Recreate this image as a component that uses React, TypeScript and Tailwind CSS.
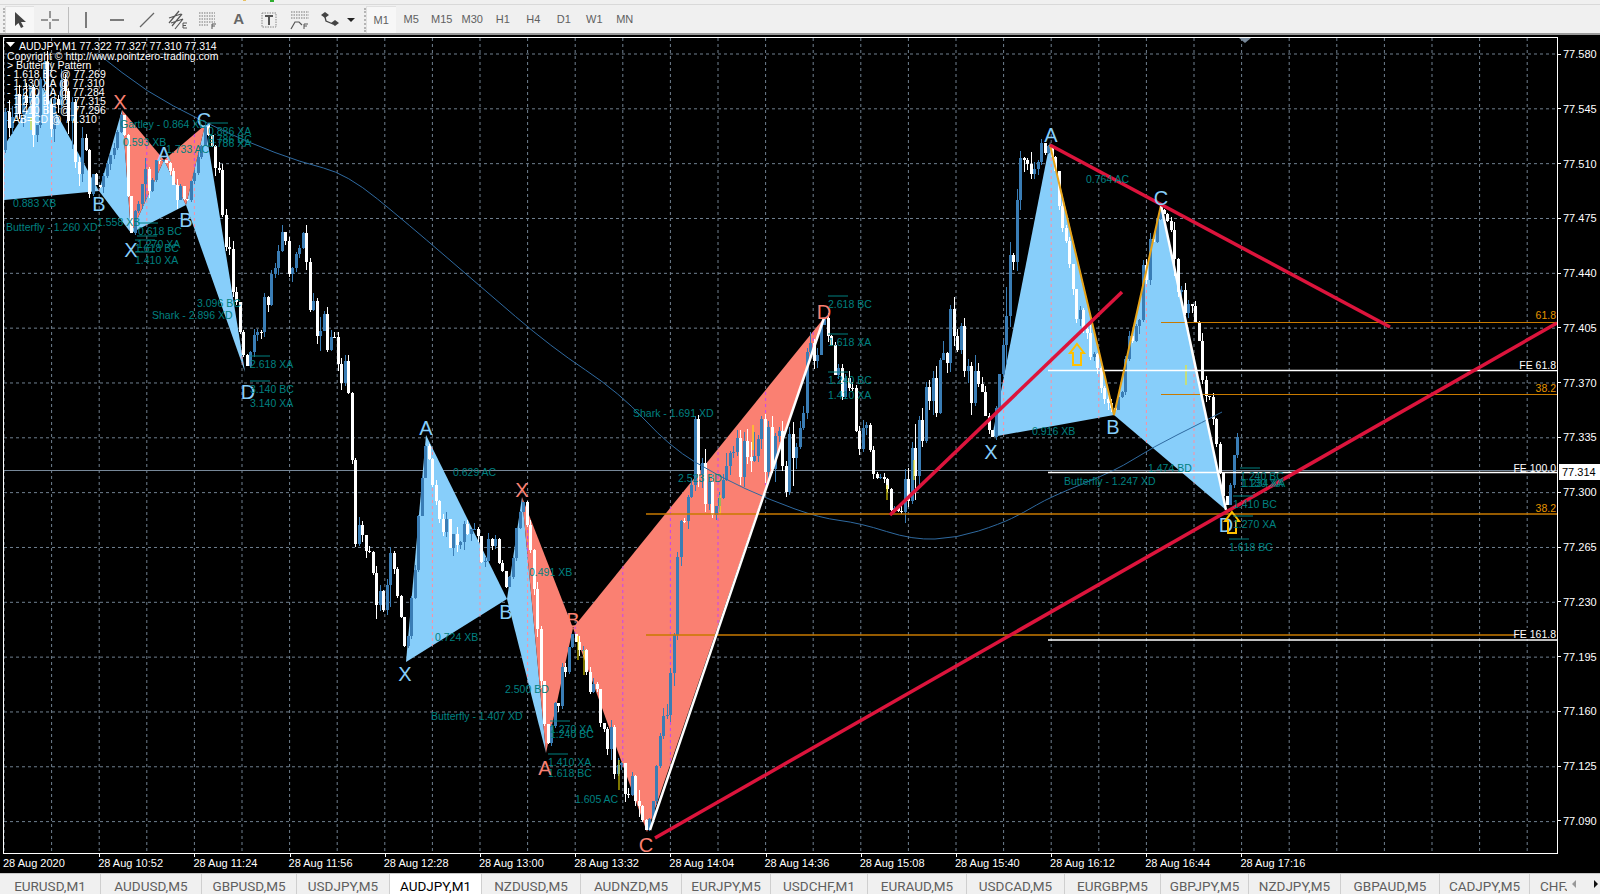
import { FC, ReactNode } from "react";

type Pt = [number, number];

// price path the candles follow, page pixels
const path: Pt[] = [
  [4, 150], [20, 125], [42, 92], [60, 105], [75, 140], [99, 191], [110, 150], [122, 110], [131, 233], [145, 175],
  [164, 160], [186, 205], [205, 125], [222, 195], [245, 372], [260, 320], [280, 240], [292, 260], [305, 245], [312, 310],
  [335, 345], [350, 400], [354, 530], [372, 560], [380, 610], [392, 550], [406, 662], [426, 435], [440, 535], [470, 548],
  [495, 555], [507, 590], [522, 497], [532, 560], [546, 753], [573, 628], [600, 720], [647, 832], [668, 700], [680, 500], [696, 440],
  [715, 500], [750, 440], [785, 470], [824, 318], [840, 380], [860, 430], [885, 480], [892, 515], [915, 470], [935, 385],
  [950, 335], [975, 385], [992, 437], [1022, 175], [1050, 142], [1075, 300], [1114, 415], [1161, 205], [1200, 360], [1226, 510], [1240, 420],
];

// noise dies out at the swing points so candles end on the pattern tips
const pivots = [99, 122, 131, 164, 186, 205, 245, 406, 426, 507, 522, 546, 573, 647, 824, 892, 992, 1050, 1114, 1161, 1226];

let seed = 1337;
const rnd = () => {
  seed = (seed * 16807) % 2147483647;
  return seed / 2147483647;
};

const yAt = (x: number) => {
  for (let i = 0; i < path.length - 1; i++) {
    const [x1, y1] = path[i];
    const [x2, y2] = path[i + 1];
    if (x >= x1 && x <= x2) return y1 + ((y2 - y1) * (x - x1)) / (x2 - x1);
  }
  return 420;
};

const candles: { x: number; top: number; h: number; hi: number; lo: number; up: boolean }[] = [];
let prev = 150;
for (let i = 0; 5 + i * 3.5 < 1240; i++) {
  const x = Math.round(5 + i * 3.5);
  const near = Math.min(...pivots.map((p) => Math.abs(p - x)));
  const wild = x < 95 || (x > 665 && x < 815) || (x > 900 && x < 1040) ? 1.7 : 1;
  const amp = Math.min(1, near / 14) * wild;
  const close = yAt(x) + (rnd() - 0.5) * 44 * amp;
  const top = Math.min(prev, close);
  const bottom = Math.max(prev, close);
  const spike = rnd() > 0.88 ? 22 : 8;
  candles.push({ x, top, h: Math.max(bottom - top, 1), hi: top - rnd() * spike * amp, lo: bottom + rnd() * spike * amp, up: close < prev });
  prev = close;
}

const blueFills = [
  "4,146 42,87 99,191 4,200",
  "99,191 122,110 131,233",
  "131,233 164,160 186,205",
  "186,205 205,125 245,372",
  "406,662 426,435 507,599",
  "507,599 522,497 546,753",
  "992,437 1050,142 1114,415",
  "1114,415 1161,205 1226,510",
];
const salmonFills = ["122,110 131,233 164,160", "164,160 186,205 205,125", "522,497 546,753 573,628", "573,628 647,832 824,318"];

const gridY = Array.from({ length: 15 }, (_, i) => 54 + i * 54.83);
const gridX = Array.from({ length: 33 }, (_, i) => 4 + i * 47.6);
const prices = Array.from({ length: 15 }, (_, i) => (77.58 - i * 0.035).toFixed(3));

const ma: Pt[] = [
  [97, 53], [147, 92], [200, 120], [250, 143], [300, 162], [347, 174], [408, 224], [480, 286], [551, 347], [620, 393], [670, 447], [720, 477],
  [770, 500], [820, 518], [860, 523], [913, 540], [957, 538], [1000, 524], [1023, 513], [1050, 497], [1115, 471], [1153, 447], [1203, 422], [1241, 402],
];
const maPath = ma.reduce((d, p, i) => {
  if (i === 0) return `M${p[0]} ${p[1]}`;
  const [px, py] = ma[i - 1];
  return `${d} Q${px} ${py} ${(px + p[0]) / 2} ${(py + p[1]) / 2}`;
}, "");

// teal pattern labels: text, x, baseline, overline
const notes: [string, number, number, boolean?][] = [
  ["0.883 XB", 13, 207], ["Butterfly - 1.260 XD", 6, 231], ["Gartley - 0.864 XD", 120, 128], ["0.593 XB", 123, 146], ["1.733 AC", 166, 153],
  ["0.886 XA", 208, 135, true], ["0.786 BC", 208, 143], ["0.786 XA", 208, 147], ["1.558 XB", 97, 226], ["0.618 BC", 138, 235, true],
  ["1.270 XA", 137, 248, true], ["1.618 BC", 135, 252, true], ["1.410 XA", 135, 264, true], ["3.096 BC", 197, 307], ["Shark - 2.896 XD", 152, 319],
  ["2.618 XA", 250, 368, true], ["3.140 BC", 250, 393, true], ["3.140 XA", 250, 407],
  ["0.629 AC", 453, 476], ["0.724 XB", 435, 641], ["2.500 BD", 505, 693], ["Butterfly - 1.407 XD", 431, 720], ["0.491 XB", 529, 576],
  ["1.270 XA", 550, 733, true], ["1.240 BC", 550, 738], ["1.410 XA", 548, 766, true], ["1.618 BC", 548, 777], ["1.605 AC", 575, 803],
  ["Shark - 1.691 XD", 633, 417], ["2.523 BD", 678, 482], ["2.618 BC", 828, 308, true], ["1.618 XA", 828, 346, true], ["1.240 BC", 828, 384, true], ["1.410 XA", 828, 399],
  ["0.764 AC", 1086, 183], ["0.916 XB", 1032, 435], ["1.474 BD", 1148, 472], ["Butterfly - 1.247 XD", 1064, 485],
  ["1.240 BC", 1240, 480, true], ["1.130 XA", 1240, 487], ["1.234 XA", 1242, 487], ["1.410 BC", 1233, 508, true], ["1.270 XA", 1233, 528, true], ["1.618 BC", 1229, 551, true],
];

const letters: [string, number, number, string][] = [
  ["B", 99, 211, "#87cefa"], ["X", 120, 109, "#fa8072"], ["C", 204, 127, "#87cefa"], ["A", 164, 161, "#87cefa"], ["B", 186, 227, "#87cefa"], ["X", 131, 257, "#87cefa"], ["D", 248, 399, "#87cefa"],
  ["A", 426, 435, "#87cefa"], ["X", 405, 681, "#87cefa"], ["B", 506, 619, "#87cefa"], ["X", 522, 497, "#fa8072"], ["B", 573, 627, "#fa8072"], ["A", 545, 775, "#fa8072"], ["C", 646, 852, "#fa8072"], ["D", 824, 319, "#fa8072"],
  ["A", 1051, 142, "#87cefa"], ["C", 1161, 205, "#87cefa"], ["B", 1113, 434, "#87cefa"], ["X", 991, 459, "#87cefa"], ["D", 1226, 532, "#87cefa"],
];

const yellows: [number, number, number][] = [[31, 118, 130], [578, 636, 660], [584, 650, 675], [619, 760, 790], [720, 495, 515], [753, 425, 450], [887, 485, 500], [914, 460, 480], [1186, 365, 385]];

const header = ["Copyright © http://www.pointzero-trading.com", "> Butterfly Pattern", "- 1.618 BC @ 77.269", "- 1.130 XA @ 77.310", "- 1.270 XA @ 77.284", "- 1.270 BC @ 77.315", "- 1.410 BC @ 77.296", "- AB=CD @ 77.310"];

const UpArrow: FC<{ x: number; y: number }> = ({ x, y }) => (
  <polygon points={`${x},${y - 11} ${x + 7},${y - 2} ${x + 4},${y - 2} ${x + 4},${y + 10} ${x - 4},${y + 10} ${x - 4},${y - 2} ${x - 7},${y - 2}`} fill="none" stroke="#ffc000" strokeWidth="2" />
);

const Chart = () => (
  <svg width="1553" height="815" viewBox="4 38 1553 815" className="block">
    <defs>
      <clipPath id="clipSalmon">{salmonFills.map((p) => <polygon key={p} points={p} />)}</clipPath>
      <clipPath id="clipBlue">{blueFills.map((p) => <polygon key={p} points={p} />)}</clipPath>
    </defs>
    {gridY.map((y) => <line key={y} x1="4" x2="1557" y1={y} y2={y} stroke="#708090" strokeDasharray="3 3" />)}
    {gridX.map((x) => <line key={x} x1={x} x2={x} y1="38" y2="853" stroke="#708090" strokeDasharray="3 3" />)}
    <line x1="4" x2="1557" y1="470.5" y2="470.5" stroke="#778899" />
    {blueFills.map((p) => <polygon key={p} points={p} fill="#87cefa" />)}
    {salmonFills.map((p) => <polygon key={p} points={p} fill="#fa8072" />)}
    <g clipPath="url(#clipSalmon)">
      {gridX.map((x) => <line key={x} x1={x} x2={x} y1="38" y2="853" stroke="#c845f0" strokeDasharray="3 3" />)}
    </g>
    <g clipPath="url(#clipBlue)">
      {gridX.map((x) => <line key={x} x1={x} x2={x} y1="38" y2="853" stroke="#ff8fa0" strokeDasharray="3 3" />)}
    </g>
    <g shapeRendering="crispEdges">
      {candles.map((c) => (
        <g key={c.x} fill={c.up ? "#3a7db5" : "#ffffff"}>
          <rect x={c.x} y={c.hi} width="1" height={c.lo - c.hi} />
          <rect x={c.x - 1} y={c.top} width="3" height={c.h} />
        </g>
      ))}
    </g>
    {yellows.map(([x, a, b]) => <line key={x} x1={x} x2={x} y1={a} y2={b} stroke="#ffee00" />)}
    <path d={maPath} fill="none" stroke="#2f6aa0" />

    <line x1="1161" x2="1557" y1="322.5" y2="322.5" stroke="#c87a00" />
    <line x1="1161" x2="1557" y1="394.5" y2="394.5" stroke="#c87a00" />
    <line x1="646" x2="1557" y1="514" y2="514" stroke="#c87a00" strokeWidth="1.5" />
    <line x1="646" x2="1557" y1="635" y2="635" stroke="#c87a00" strokeWidth="1.5" />
    <line x1="1048" x2="1557" y1="370.5" y2="370.5" stroke="#ffffff" strokeWidth="1.5" />
    <line x1="1048" x2="1557" y1="472.5" y2="472.5" stroke="#ffffff" strokeWidth="1.5" />
    <line x1="1048" x2="1557" y1="640" y2="640" stroke="#ffffff" strokeWidth="1.5" />

    <polyline points="1050,145 1114,415 1161,205" fill="none" stroke="#e8a317" strokeWidth="2" />
    <line x1="1161" y1="205" x2="1226" y2="510" stroke="#ffffff" strokeWidth="2.5" />
    <line x1="650" y1="830" x2="824" y2="318" stroke="#ffffff" strokeWidth="2.5" />
    <line x1="1050" y1="145" x2="1390" y2="327" stroke="#dc143c" strokeWidth="3.5" />
    <line x1="890" y1="515" x2="1122" y2="292" stroke="#dc143c" strokeWidth="3.5" />
    <line x1="655" y1="838" x2="1557" y2="323" stroke="#dc143c" strokeWidth="3.5" />
    <polygon points="1239,38 1251,38 1245,43" fill="#778899" />

    <g fontSize="20">
      {letters.map(([t, x, y, color]) => <text key={`${t}${x}`} x={x} y={y} textAnchor="middle" fill={color}>{t}</text>)}
    </g>
    <UpArrow x={1077} y={355} />
    <UpArrow x={1232} y={523} />
    <g fontSize="10.5" fill="#008080">
      {notes.map(([t, x, y, over]) => (
        <g key={`${t}${x}${y}`}>
          {over && <line x1={x} x2={x + 20} y1={y - 12} y2={y - 12} stroke="#008080" />}
          <text x={x} y={y}>{t}</text>
        </g>
      ))}
    </g>

    <g fontSize="10.5">
      <text x="1556" y="319" textAnchor="end" fill="#e69500">61.8</text>
      <text x="1556" y="392" textAnchor="end" fill="#e69500">38.2</text>
      <text x="1556" y="512" textAnchor="end" fill="#e69500">38.2</text>
      <rect x="1519" y="359" width="38" height="11" fill="#000000" />
      <text x="1556" y="369" textAnchor="end" fill="#ffffff">FE 61.8</text>
      <rect x="1513" y="461" width="44" height="9" fill="#000000" />
      <text x="1556" y="472" textAnchor="end" fill="#ffffff">FE 100.0</text>
      <rect x="1515" y="628" width="42" height="11" fill="#000000" />
      <text x="1556" y="638" textAnchor="end" fill="#ffffff">FE 161.8</text>
    </g>

    <g fontSize="10.5" fill="#ffffff" className="whitespace-pre">
      <polygon points="6,42 15,42 10.5,47" />
      <text x="19" y="50">AUDJPY,M1  77.322 77.327 77.310 77.314</text>
      {header.map((t, i) => <text key={t} x="7" y={60 + i * 9}>{t}</text>)}
    </g>
  </svg>
);

const Slot: FC<{ w: string; children?: ReactNode; on?: boolean }> = ({ w, children, on }) => (
  <div className={`${w} h-[27px] shrink-0 flex items-center justify-center ${on ? "bg-[#f7f7f7] border-t border-l border-[#e0e0e0]" : ""}`}>{children}</div>
);

const Gripper = () => <div className="w-[2px] h-[24px] shrink-0 border-l-2 border-dotted border-[#b4b4b4]" />;

const Dotted: FC<{ y: number; x?: number; w?: number }> = ({ y, x = 1, w = 16 }) => <line x1={x} x2={x + w} y1={y} y2={y} stroke="#777" strokeDasharray="1.5 1" />;

const Toolbar = () => (
  <div className="h-[35px] shrink-0 bg-[#f0f0f0] border-b-2 border-[#9a9a9a]">
    <div className="h-[5px] border-b border-[#d9d9d9] flex">
      <div className="w-[3px] h-[1px] ml-[243px] bg-[#e8c060]" />
      <div className="w-[4px] h-[2px] ml-[24px] bg-[#2fae2f]" />
    </div>
    <div className="flex items-center pl-[3px] pt-[1px] h-[28px] text-[#666]">
      <Gripper />
      <Slot w="w-[29px]" on>
        <svg width="14" height="18" viewBox="0 0 14 18"><path d="M2 1 L2 15 L5.5 12 L8 17 L10.5 15.8 L8 11 L13 11 Z" fill="#444" /></svg>
      </Slot>
      <Slot w="w-[31px]">
        <svg width="18" height="18" viewBox="0 0 18 18" stroke="#777" strokeWidth="1.5"><path d="M0 9 H7 M11 9 H18 M9 0 V7 M9 11 V18" /></svg>
      </Slot>
      <div className="w-[6px] shrink-0 flex justify-center"><div className="w-px h-[26px] bg-[#bdbdbd]" /></div>
      <Slot w="w-[30.5px]">
        <svg width="4" height="16" viewBox="0 0 4 16"><line x1="2" x2="2" y1="0" y2="16" stroke="#555" strokeWidth="1.5" /></svg>
      </Slot>
      <Slot w="w-[30.5px]">
        <svg width="16" height="4" viewBox="0 0 16 4"><line x1="1" x2="15" y1="2" y2="2" stroke="#555" strokeWidth="1.5" /></svg>
      </Slot>
      <Slot w="w-[30.5px]">
        <svg width="16" height="16" viewBox="0 0 16 16"><line x1="1" x2="15" y1="15" y2="1" stroke="#666" strokeWidth="1.3" /></svg>
      </Slot>
      <Slot w="w-[30.5px]">
        <svg width="20" height="20" viewBox="0 0 20 20" stroke="#555" fill="none">
          <path d="M1 13 L11 1 M4 16 L14 4 M7 19 L15 9 M1 8 L13 4 M3 13 L15 9" strokeWidth="1.2" />
          <path d="M15 13 H19 M15 15.5 H18 M15 18 H19 M15 13 V18" strokeWidth="1" />
        </svg>
      </Slot>
      <Slot w="w-[30.5px]">
        <svg width="20" height="20" viewBox="0 0 20 20" fill="none">
          <Dotted y={3} /><Dotted y={6} /><Dotted y={9} /><Dotted y={12} /><Dotted y={15} w={9} />
          <path d="M14 14 H18 M14 16 H17 M14 14 V19" stroke="#555" />
        </svg>
      </Slot>
      <Slot w="w-[30.5px]"><span className="text-[15px] font-bold text-[#666]">A</span></Slot>
      <Slot w="w-[30.5px]">
        <svg width="18" height="18" viewBox="0 0 18 18" fill="none">
          <rect x="2" y="2" width="14" height="14" stroke="#888" strokeDasharray="1.5 1" />
          <path d="M5 5 H13 M9 5 V14" stroke="#555" strokeWidth="2" />
        </svg>
      </Slot>
      <Slot w="w-[30.5px]">
        <svg width="20" height="20" viewBox="0 0 20 20" fill="none">
          <Dotted y={2} w={18} /><Dotted y={5} w={18} /><Dotted y={8} w={18} />
          <path d="M1 19 L5 12 H9 L12 15" stroke="#555" strokeWidth="1.2" />
          <path d="M14 14 H18 M14 16 H17 M14 14 V19" stroke="#555" />
        </svg>
      </Slot>
      <Slot w="w-[30.5px]">
        <svg width="20" height="18" viewBox="0 0 20 18" fill="#444">
          <path d="M5 1 L9 4 L5 7 L1 4 Z M15 9 L19 12 L15 15 L11 12 Z" />
          <path d="M5 6 L6 10 L13 13" fill="none" stroke="#444" strokeWidth="1.3" />
        </svg>
      </Slot>
      <div className="w-[10px] shrink-0 flex justify-center">
        <div className="w-0 h-0 border-l-[4px] border-r-[4px] border-t-[4px] border-l-transparent border-r-transparent border-t-[#222]" />
      </div>
      <div className="w-[8px] shrink-0" />
      <Gripper />
      {["M1", "M5", "M15", "M30", "H1", "H4", "D1", "W1", "MN"].map((t, i) => (
        <Slot key={t} w="w-[30.5px]" on={i === 0}><span className="text-[11px] text-[#606060]">{t}</span></Slot>
      ))}
    </div>
  </div>
);

const PriceAxis = () => (
  <div className="relative flex-1 flex flex-col justify-between pt-[10px] pb-[26px] text-white text-[11px]">
    {prices.map((p) => (
      <div key={p} className="flex items-center h-[14px] leading-[14px]">
        <div className="w-[3px] h-px bg-white mr-[2px]" />
        <span>{p}</span>
      </div>
    ))}
    {/* current bid tag */}
    <div className="absolute left-[1px] top-[427px] w-[41px] h-[16px] bg-white text-black pl-[3px] leading-[16px]">77.314</div>
  </div>
);

const times = ["28 Aug 2020", "28 Aug 10:52", "28 Aug 11:24", "28 Aug 11:56", "28 Aug 12:28", "28 Aug 13:00", "28 Aug 13:32", "28 Aug 14:04", "28 Aug 14:36", "28 Aug 15:08", "28 Aug 15:40", "28 Aug 16:12", "28 Aug 16:44", "28 Aug 17:16"];

const TimeAxis = () => (
  <div className="h-[18px] pl-[3px] flex text-white text-[11px] leading-[18px]">
    {times.map((t, i) => (
      <div key={t} className="w-[95.2px] shrink-0 relative">
        {i > 0 && <div className="absolute left-[1px] top-0 w-px h-[3px] bg-white" />}
        {t}
      </div>
    ))}
  </div>
);

const tabs: [string, string][] = [
  ["EURUSD,M1", "w-[101px]"], ["AUDUSD,M5", "w-[101px]"], ["GBPUSD,M5", "w-[95px]"], ["USDJPY,M5", "w-[93px]"], ["AUDJPY,M1", "w-[92px]"],
  ["NZDUSD,M5", "w-[99px]"], ["AUDNZD,M5", "w-[101px]"], ["EURJPY,M5", "w-[89px]"], ["USDCHF,M1", "w-[97px]"], ["EURAUD,M5", "w-[99px]"],
  ["USDCAD,M5", "w-[98px]"], ["EURGBP,M5", "w-[96px]"], ["GBPJPY,M5", "w-[88px]"], ["NZDJPY,M5", "w-[92px]"], ["GBPAUD,M5", "w-[99px]"], ["CADJPY,M5", "w-[90px]"],
];

const TabBar = () => (
  <div className="h-[21px] shrink-0 bg-[#f0f0f0] border-t border-[#c8c8c8] flex font-['Roboto',sans-serif] text-[13.5px] leading-[20px] text-[#5f5f5f] overflow-hidden">
    {tabs.map(([name, w]) => (
      <div key={name} className={`${w} shrink-0 pt-[2px] text-center border-r border-[#cfcfcf] ${name === "AUDJPY,M1" ? "bg-white text-black" : ""}`}>{name}</div>
    ))}
    <div className="w-[37px] shrink-0 pl-[10px] pt-[2px] overflow-hidden whitespace-nowrap">CHFJPY,M5</div>
    <div className="flex items-center gap-[18px] pl-[5px]">
      <div className="w-0 h-0 border-t-[4px] border-b-[4px] border-r-[4px] border-t-transparent border-b-transparent border-r-[#999]" />
      <div className="w-0 h-0 border-t-[4px] border-b-[4px] border-l-[4px] border-t-transparent border-b-transparent border-l-[#111]" />
    </div>
  </div>
);

export default function App() {
  return (
    <div className="w-[1600px] h-[894px] overflow-hidden flex flex-col font-['Liberation_Sans',sans-serif] bg-black">
      <Toolbar />
      <div className="flex-1 flex flex-col pt-[2px]">
        <div className="flex h-[817px] pl-[3px]">
          <div className="w-[1555px] h-[817px] shrink-0 border border-white">
            <Chart />
          </div>
          <PriceAxis />
        </div>
        <TimeAxis />
      </div>
      <TabBar />
    </div>
  );
}
